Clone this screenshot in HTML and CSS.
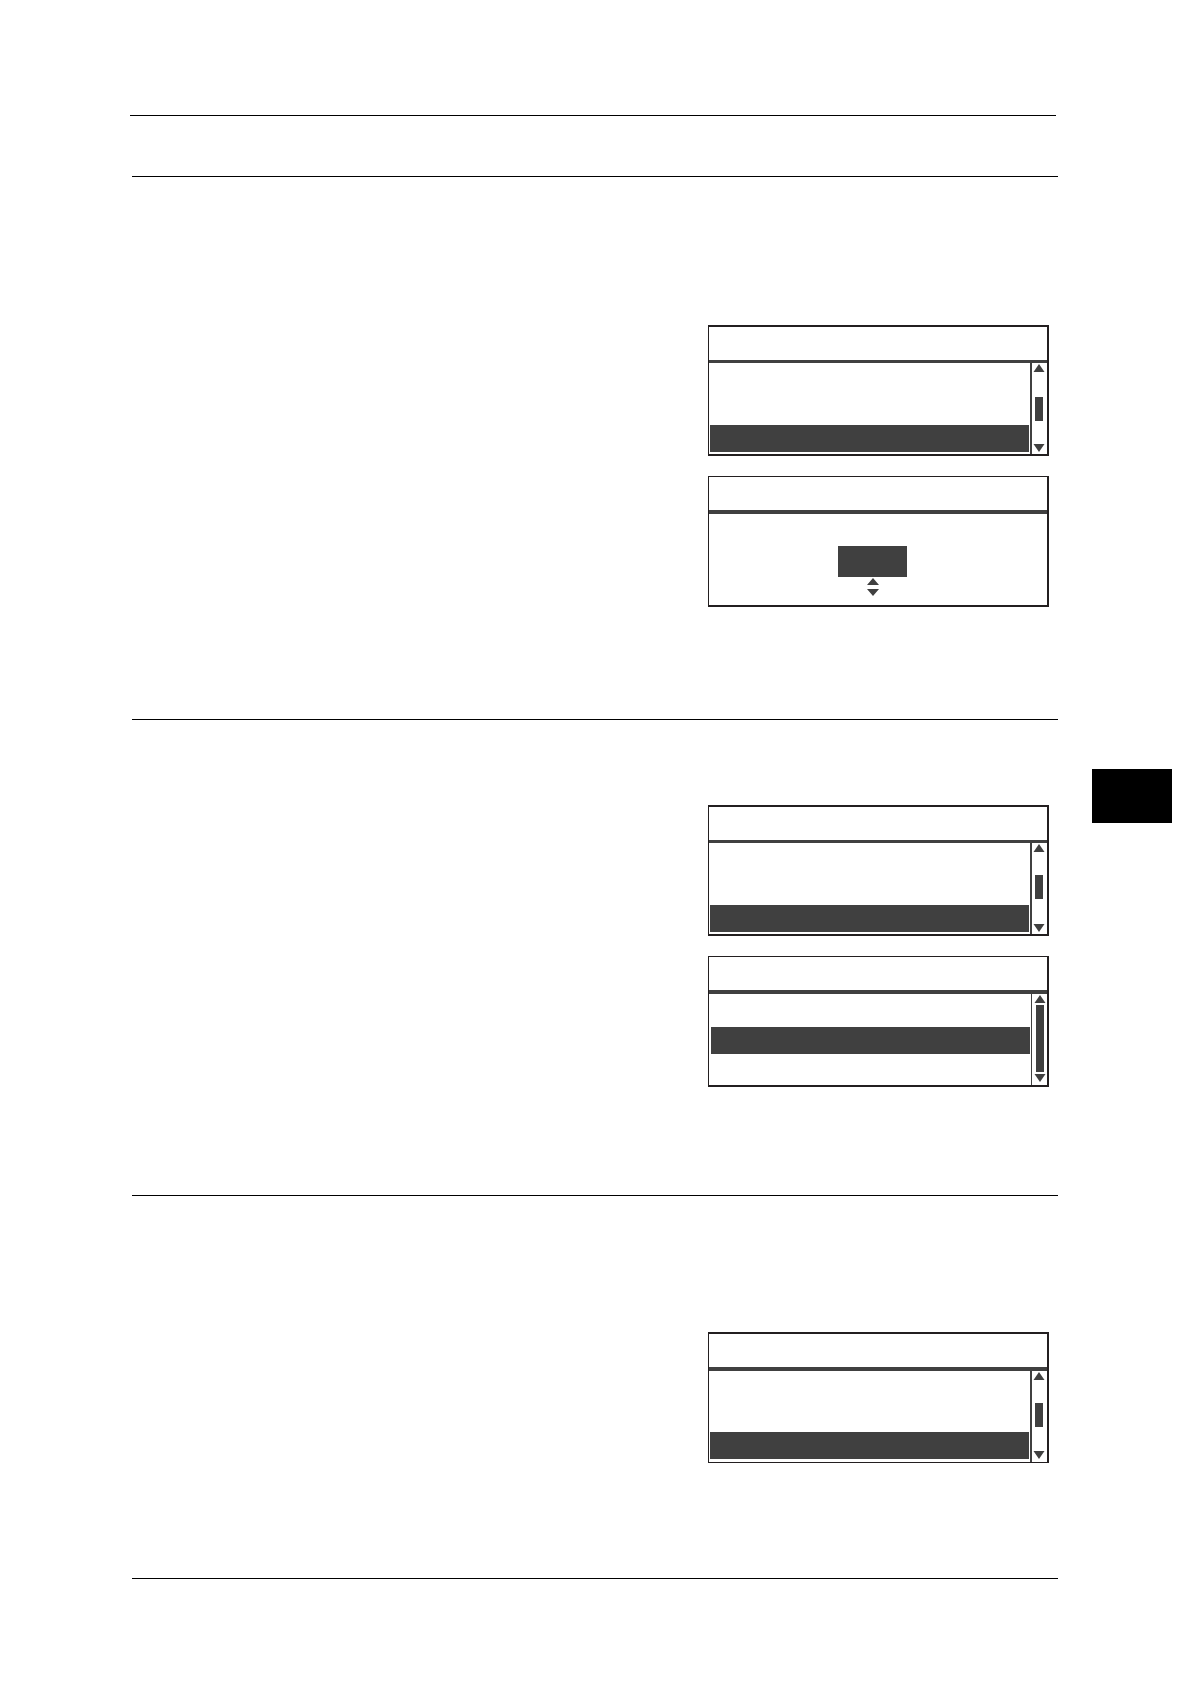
FILE: index.html
```html
<!DOCTYPE html>
<html lang="en">
<head>
    <meta charset="UTF-8">
    <meta name="viewport" content="width=device-width, initial-scale=1.0">
    <link rel="stylesheet" href="styles.css">
</head>
<body>
    <header class="page-header"></header>
    <div class="page">
        <main class="content">
            <section class="section section-first">
                <div class="screen">
                    <div class="screen-title"></div>
                    <div class="screen-body">
                        <div class="list">
                            <div class="selected"></div>
                        </div>
                        <div class="scroll">
                            <svg class="arrow" viewBox="0 0 10 8"><path d="M5 0L10.5 8H-0.5Z"/></svg>
                            <div class="thumb thumb-low"></div>
                            <svg class="arrow arrow-down" viewBox="0 0 10 8"><path d="M-0.5 0H10.5L5 8Z"/></svg>
                        </div>
                    </div>
                </div>
                <div class="screen screen-thin">
                    <div class="screen-title"></div>
                    <div class="screen-body screen-value">
                        <div class="value"></div>
                        <svg class="spinner" viewBox="0 0 13 18"><path d="M7 0L13 7H1ZM1 11H13L7 18Z"/></svg>
                    </div>
                </div>
            </section>
            <section class="section section-second">
                <div class="screen">
                    <div class="screen-title"></div>
                    <div class="screen-body">
                        <div class="list">
                            <div class="selected"></div>
                        </div>
                        <div class="scroll">
                            <svg class="arrow" viewBox="0 0 10 8"><path d="M5 0L10.5 8H-0.5Z"/></svg>
                            <div class="thumb"></div>
                            <svg class="arrow arrow-down" viewBox="0 0 10 8"><path d="M-0.5 0H10.5L5 8Z"/></svg>
                        </div>
                    </div>
                </div>
                <div class="screen screen-thin">
                    <div class="screen-title"></div>
                    <div class="screen-body">
                        <div class="list list-middle">
                            <div class="selected"></div>
                        </div>
                        <div class="scroll scroll-thin">
                            <svg class="arrow" viewBox="0 0 10 8"><path d="M5 0L10.5 8H-0.5Z"/></svg>
                            <div class="thumb thumb-full"></div>
                            <svg class="arrow arrow-down" viewBox="0 0 10 8"><path d="M-0.5 0H10.5L5 8Z"/></svg>
                        </div>
                    </div>
                </div>
            </section>
            <section class="section section-third">
                <div class="screen screen-last">
                    <div class="screen-title"></div>
                    <div class="screen-body">
                        <div class="list">
                            <div class="selected"></div>
                        </div>
                        <div class="scroll">
                            <svg class="arrow" viewBox="0 0 10 8"><path d="M5 0L10.5 8H-0.5Z"/></svg>
                            <div class="thumb"></div>
                            <svg class="arrow arrow-down" viewBox="0 0 10 8"><path d="M-0.5 0H10.5L5 8Z"/></svg>
                        </div>
                    </div>
                </div>
            </section>
            <footer class="page-footer"></footer>
        </main>
        <aside class="chapter-tab"></aside>
    </div>
</body>
</html>
```

FILE: styles.css
```css
* {
    box-sizing: border-box;
}
body {
    margin: 0;
    background-color: #fff;
    font-family: "Liberation Sans", Arial, sans-serif;
}
.page-header {
    margin: 0 134px 0 130px;
    padding-top: 115px;
    border-bottom: 1px solid #000;
}
.page {
    display: grid;
    grid-template-columns: 1fr 80px;
    column-gap: 34px;
    padding: 0 18px 0 132px;
}
.content {
    padding-top: 60px;
}
.section {
    display: flex;
    flex-direction: column;
    align-items: flex-end;
    gap: 20px;
    padding-right: 9px;
    border-top: 1px solid #000;
}
.section-first {
    padding-top: 148px;
    padding-bottom: 112px;
}
.section-second {
    padding-top: 85px;
    padding-bottom: 108px;
}
.section-third {
    padding-top: 136px;
    padding-bottom: 115px;
}
.page-footer {
    border-top: 1px solid #000;
}
.chapter-tab {
    height: 54px;
    margin-top: 653px;
    background-color: #000;
}

/* Printer display */
.screen {
    width: 341px;
    border: 2px solid #231f20;
    border-left-width: 1px;
}
.screen-title {
    height: 36px;
    border-bottom: 3px solid #404040;
}
.screen-body {
    display: flex;
    height: 91px;
}
.screen-thin {
    border-top-width: 1px;
}
.screen-last {
    border-bottom-width: 1px;
}
.screen-thin .screen-title,
.screen-last .screen-title {
    height: 37px;
    border-bottom-width: 4px;
}
.list {
    flex: 1;
    display: flex;
    flex-direction: column;
    justify-content: flex-end;
    padding: 0 1px 2px 1px;
}
.list-middle {
    justify-content: flex-start;
    padding: 33px 1px 0 2px;
}
.selected {
    height: 27px;
    background-color: #404040;
}
.scroll {
    display: flex;
    flex-direction: column;
    width: 17px;
    padding: 1px 3px 2px 2px;
    border-left: 2px solid #404040;
}
.scroll-thin {
    width: 16px;
    padding: 1px 2px 3px 3px;
    border-left-width: 1px;
}
.screen-last .list,
.screen-last .scroll {
    padding-bottom: 3px;
}
.arrow {
    display: block;
    width: 10px;
    height: 8px;
    fill: #404040;
    overflow: visible;
}
.arrow-down {
    margin-top: auto;
}
.thumb {
    height: 24px;
    margin: 23px 1px 0;
    background-color: #404040;
}
.thumb-low {
    margin-top: 25px;
}
.thumb-full {
    height: 67px;
    margin-top: 2px;
}
.screen-value {
    flex-direction: column;
    align-items: center;
    gap: 1px;
    padding: 32px 11px 0 0;
}
.value {
    width: 69px;
    height: 31px;
    background-color: #404040;
}
.spinner {
    display: block;
    width: 13px;
    height: 18px;
    fill: #404040;
}
```
